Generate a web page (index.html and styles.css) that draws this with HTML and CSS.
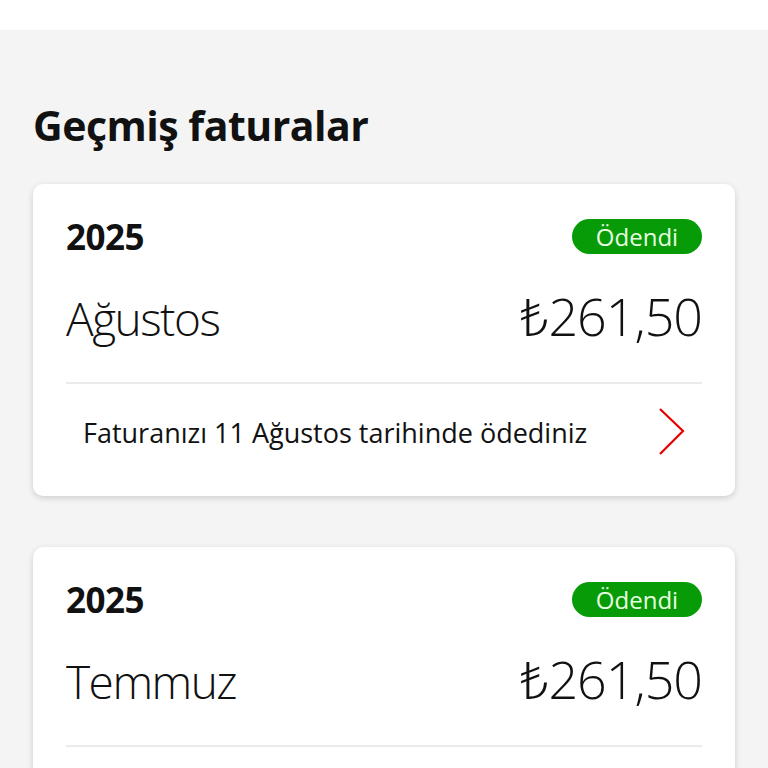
FILE: index.html
```html
<!DOCTYPE html>
<html lang="tr">
<head>
<meta charset="utf-8">
<link rel="stylesheet" href="styles.css">
</head>
<body>
<header class="topbar">
  <p class="topbar-text">yeni dönem faturanız hazırlandı, bu ödemeleri yine her zaman görebilirsiniz</p>
</header>
<main class="content">
  <h1 class="title">Geçmiş faturalar</h1>
  <section class="card">
    <div class="card-head">
      <span class="year">2025</span>
      <span class="badge">Ödendi</span>
    </div>
    <div class="card-main">
      <span class="month">Ağustos</span>
      <span class="amount">₺261,50</span>
    </div>
    <div class="divider"></div>
    <div class="card-foot">
      <span class="note">Faturanızı 11 Ağustos tarihinde ödediniz</span>
      <svg class="chevron" width="30" height="50" viewBox="0 0 30 50"><path d="M4 2 L27 24 L4 47" fill="none" stroke="#e60000" stroke-width="2.2"/></svg>
    </div>
  </section>
  <section class="card">
    <div class="card-head">
      <span class="year">2025</span>
      <span class="badge">Ödendi</span>
    </div>
    <div class="card-main">
      <span class="month">Temmuz</span>
      <span class="amount">₺261,50</span>
    </div>
    <div class="divider"></div>
    <div class="card-foot">
      <span class="note">Faturanızı 11 Temmuz tarihinde ödediniz</span>
      <svg class="chevron" width="30" height="50" viewBox="0 0 30 50"><path d="M4 2 L27 24 L4 47" fill="none" stroke="#e60000" stroke-width="2.2"/></svg>
    </div>
  </section>
</main>
</body>
</html>
```
FILE: styles.css
```css
html, body {
  margin: 0;
  padding: 0;
  background: #f4f4f4;
  font-family: "Open Sans", "Noto Sans", sans-serif;
  color: #111;
}
.topbar {
  background: #fff;
  height: 30px;
  overflow: hidden;
}
.topbar-text {
  margin: -35px 0 0 8px;
  font-size: 28px;
  line-height: 28px;
  white-space: nowrap;
  color: #222;
}
.content {
  padding: 0 33px;
}
.title {
  margin: 0;
  padding-top: 70px;
  font-size: 41px;
  line-height: 50px;
  font-weight: 700;
  letter-spacing: -0.5px;
  color: #111;
}
.card {
  margin-top: 34px;
  background: #fff;
  border-radius: 10px;
  box-shadow: 0 2px 6px rgba(0,0,0,0.16);
  padding: 34px 33px 0;
}
.card + .card {
  margin-top: 51px;
}
.card-head {
  display: flex;
  justify-content: space-between;
  align-items: center;
  height: 36px;
}
.year {
  font-size: 35px;
  font-weight: 700;
  letter-spacing: -0.5px;
}
.badge {
  background: #079b07;
  color: #e8ffe0;
  border-radius: 18px;
  width: 130px;
  height: 35px;
  display: flex;
  align-items: center;
  justify-content: center;
  font-size: 24px;
  font-weight: 400;
}
.card-main {
  display: flex;
  justify-content: space-between;
  align-items: baseline;
  margin-top: 32px;
  line-height: 60px;
}
.month {
  font-size: 46px;
  font-weight: 300;
  letter-spacing: -1.5px;
}
.amount {
  font-size: 52px;
  font-weight: 300;
  letter-spacing: -1px;
}
.divider {
  margin-top: 34px;
  height: 2px;
  background: #ebebeb;
}
.card-foot {
  display: flex;
  justify-content: space-between;
  align-items: center;
  padding: 23px 16px 39px 17px;
}
.note {
  font-size: 27px;
  font-weight: 400;
  color: #111;
}
.chevron {
  display: block;
}
```
